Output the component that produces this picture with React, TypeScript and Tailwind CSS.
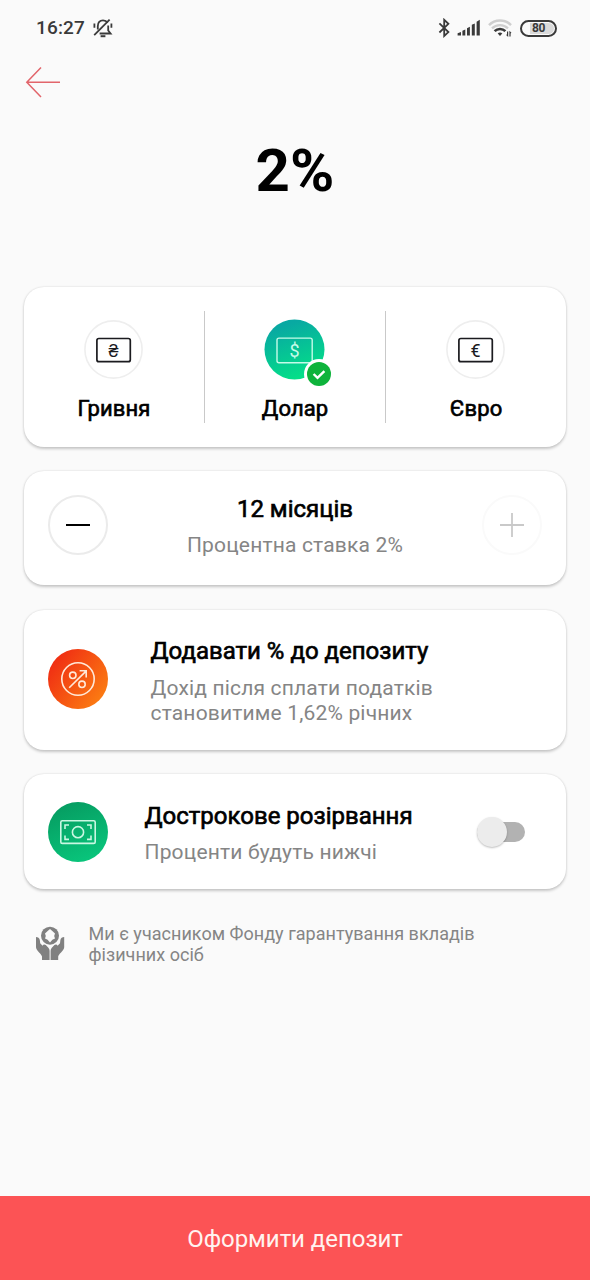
import React from 'react'

interface CardProps {
  children: React.ReactNode
  className?: string
}

const Card: React.FC<CardProps> = ({ children, className }) => (
  <section
    className={`mx-6 flex rounded-[20px] bg-white shadow-[0_1.5px_3px_rgba(0,0,0,0.2),0_0_2px_rgba(0,0,0,0.08)] ${className ?? ''}`}
  >
    {children}
  </section>
)

const StatusBar = () => (
  <header className="flex h-14 items-center justify-between pr-[33px] pl-9 text-[#3a3a3a]">
    <div className="flex items-center gap-2">
      <span className="text-[19px] leading-6 font-medium tracking-[0.15px]">16:27</span>
      <svg width="20" height="20" viewBox="0 0 20 20" fill="none" stroke="currentColor" strokeWidth="1.8">
        <path d="M4.8 11.5V8.2C4.8 4.6 6.8 2.4 10 2.4c2 0 3.6.8 4.5 2.3M15.2 7.4v5.1l2.4 3H6.6" />
        <path d="M1.2 17.2 16.6 1.6" />
        <path d="M7.6 18.2h4.8" strokeWidth="2" />
        <path d="M1.4 5.6v4.2M18.4 5.6v4.2" strokeWidth="1.8" />
      </svg>
    </div>
    <div className="flex items-center">
      <svg width="12" height="20" viewBox="0 0 12 20" fill="none" stroke="currentColor" strokeWidth="1.8">
        <path d="m1.4 5.4 9 8.7L6.2 18V1.8l4.2 4-9 8.7" />
      </svg>
      <svg className="ml-[7px]" width="23" height="18" viewBox="0 0 23 18" fill="currentColor">
        <path d="M0.6 16.4v-2.2l3.4-1.3v3.5zM5.4 16.4v-4.6l2.9-1.2v5.8zM10 16.4V9.2l2.9-1.4v8.6zM14.8 16.4V5.8l3-1.4v12zM19.6 16.4V2.8L22.8.8v15.6z" />
      </svg>
      <svg className="ml-[8px]" width="24" height="20" viewBox="0 0 24 20" fill="none" stroke="currentColor">
        <path d="M1 7.2C7 1 17 1 23 7.2" stroke="#cfcfcf" strokeWidth="2.5" />
        <path d="M4 10.4C8.5 6 15.5 6 20 10.4" stroke="#cfcfcf" strokeWidth="2.3" />
        <path d="M6.6 13.2c3-3 7.8-3 10.8 0" strokeWidth="2.6" />
        <path d="m12 18-2.3-2.5c1.2-1.3 3.4-1.3 4.6 0z" fill="currentColor" stroke="none" />
        <path d="M19.6 13.4v4.2l-1-1M22 18.4v-4.2l1 1" strokeWidth="1.2" />
      </svg>
      <div className="ml-[8px] flex h-[17px] w-[37px] rounded-full border-2 border-current p-px">
        <div className="flex w-full items-center justify-center rounded-full bg-[linear-gradient(90deg,#fafafa_22%,#dadada_22%)] text-[12px] leading-none font-bold tracking-[-0.3px]">
          80
        </div>
      </div>
    </div>
  </header>
)

const Banknote = ({ sign, selected }: { sign: string; selected?: boolean }) => (
  <svg className="mr-[1.5px] overflow-visible" width="60" height="60" viewBox="-0.5 0.5 60 60">
    <defs>
      <linearGradient id="teal" x1="0.3" y1="0" x2="0.65" y2="1">
        <stop offset="0.1" stopColor="#08a9a2" />
        <stop offset="0.95" stopColor="#04df88" />
      </linearGradient>
    </defs>
    {selected ? (
      <circle cx="30" cy="30" r="30" fill="url(#teal)" />
    ) : (
      <circle cx="30" cy="30" r="28.6" fill="#fff" stroke="#eeeeee" strokeWidth="1.6" />
    )}
    <rect
      x={selected ? 12.5 : 13.4}
      y={selected ? 18.6 : 19}
      width={selected ? 35.2 : 33.4}
      height={selected ? 24.6 : 23.2}
      rx="2"
      fill="none"
      stroke={selected ? '#c5fbe9' : '#1b1b1f'}
      strokeWidth={selected ? 1.4 : 1.7}
    />
    <text x="30" y="37" textAnchor="middle" fontSize="18" fill={selected ? '#c5fbe9' : '#1b1b1f'}>
      {sign}
    </text>
    {selected && (
      <>
        <circle cx="54.5" cy="54.5" r="15" fill="#fff" />
        <circle cx="54.5" cy="54.5" r="12" fill="#0eb33b" />
        <path d="m49.1 54.5 3.9 3.9 6.9-6.8" fill="none" stroke="#fff" strokeWidth="2.4" />
      </>
    )}
  </svg>
)

const currencies = [
  { sign: '₴', name: 'Гривня' },
  { sign: '$', name: 'Долар', selected: true },
  { sign: '€', name: 'Євро' },
]

const Title = ({ children }: { children: React.ReactNode }) => (
  <h2 className="text-[24px] leading-7 text-black [-webkit-text-stroke:0.65px_black]">{children}</h2>
)

const Subtitle = ({ children, className }: { children: React.ReactNode; className?: string }) => (
  <p className={`text-[21px] leading-[25px] tracking-[0.17px] text-[#858585] ${className ?? 'mt-2.5'}`}>{children}</p>
)

const PercentIcon = () => (
  <svg className="shrink-0" width="60" height="60" viewBox="0 0 60 60" fill="none" stroke="#ffe9d8" strokeWidth="1.6">
    <defs>
      <linearGradient id="orange" x1="0.1" y1="0.2" x2="0.9" y2="0.8">
        <stop stopColor="#f02f13" />
        <stop offset="1" stopColor="#fb7a12" />
      </linearGradient>
    </defs>
    <circle cx="30" cy="30" r="30" fill="url(#orange)" stroke="none" />
    <circle cx="30" cy="30" r="16.2" />
    <circle cx="24.8" cy="26.3" r="3.2" />
    <circle cx="34" cy="35.3" r="3.2" />
    <path d="M21.2 38.8 37.8 22.4M31.6 21.8h6.6v6.6" />
  </svg>
)

const CashIcon = () => (
  <svg className="shrink-0" width="60" height="60" viewBox="0 0 60 60" fill="none" stroke="#c9f7e2" strokeWidth="1.6">
    <defs>
      <linearGradient id="green" x1="0.3" y1="0" x2="0.7" y2="1">
        <stop stopColor="#069c61" />
        <stop offset="1" stopColor="#09c67c" />
      </linearGradient>
    </defs>
    <circle cx="30" cy="30" r="30" fill="url(#green)" stroke="none" />
    <rect x="12.8" y="18.8" width="34.4" height="22.6" rx="1.5" />
    <circle cx="30" cy="30.2" r="5.6" />
    <path d="M17 27v-4h4M39 23h4v4M43 33.4v4h-4M21 37.4h-4v-4" />
  </svg>
)

const HandsIcon = () => (
  <svg className="shrink-0" width="30" height="35" viewBox="0 0 30 35" fill="#808080">
    <circle cx="15" cy="9.7" r="9" />
    <path d="m15 3-2.6 2.2-2.4 2.4.8 2.4-.8 2.4 2.6 1.4L15 16.6l2.4-2.8 2.6-1.4-.8-2.4.8-2.4-2.4-2.4z" fill="#fafafa" />
    <path d="M1 11c1.8 0 3.6 1.2 3.8 3l.4 3.2 2.4 2.6c.6-1.4 1.9-1.7 3.2-.7l2.6 2.7c.8.9 1.2 1.9 1.2 3V34H7v-3.4c0-2.4-5.6-5.6-6-9.4z" />
    <path d="M29.2 11c-1.8 0-3.6 1.2-3.8 3l-.4 3.2-2.4 2.6c-.6-1.4-1.9-1.7-3.2-.7l-2.6 2.7c-.8.9-1.2 1.9-1.2 3V34h7.6v-3.4c0-2.4 5.6-5.6 6-9.4z" />
  </svg>
)

export default function App() {
  return (
    <main className="flex h-[1280px] w-[590px] flex-col bg-[#fafafa] font-[Roboto,sans-serif]">
      <StatusBar />

      <button className="mt-[10px] ml-[25px] w-9">
        <svg width="36" height="32" viewBox="0 0 36 32" fill="none" stroke="#e2656b" strokeWidth="1.5">
          <path d="M16 1.5 1.8 16.2 16 31M1.8 16.2H35" />
        </svg>
      </button>

      <h1 className="mt-[38px] text-center text-[60px] leading-[70px] font-bold text-black">2%</h1>

      <Card className="mt-[81px] h-40 py-6">
        {currencies.map((item, index) => (
          <div
            key={item.name}
            className={`flex flex-1 flex-col items-center pt-[8.5px] ${index > 0 ? 'border-l border-[#c9c9c9]' : ''}`}
          >
            <Banknote sign={item.sign} selected={item.selected} />
            <span className="mt-[16.5px] text-[22px] leading-[25px] tracking-[0.1px] text-black [-webkit-text-stroke:0.65px_black]">
              {item.name}
            </span>
          </div>
        ))}
      </Card>

      <Card className="mt-6 h-[114px] justify-between px-6 pt-6">
        <button className="flex size-[60px] items-center justify-center rounded-full border-2 border-[#ebebeb]">
          <span className="h-0.5 w-6 bg-black" />
        </button>
        <div className="text-center">
          <Title>12 місяців</Title>
          <Subtitle>Процентна ставка 2%</Subtitle>
        </div>
        <button className="flex size-[60px] items-center justify-center rounded-full border-2 border-[#fafafa]">
          <svg width="24" height="24" viewBox="0 0 24 24" stroke="#c9c9c9" strokeWidth="1.8">
            <path d="M0 12h24M12 0v24" />
          </svg>
        </button>
      </Card>

      <Card className="mt-[25px] h-[140px] items-start px-6 pt-[27px]">
        <div className="mt-3">
          <PercentIcon />
        </div>
        <div className="ml-[42.5px]">
          <Title>Додавати % до депозиту</Title>
          <Subtitle className="mt-[11px]">
            Дохід після сплати податків
            <br />
            становитиме 1,62% річних
          </Subtitle>
        </div>
      </Card>

      <Card className="mt-6 h-[115px] items-start px-6 pt-7">
        <CashIcon />
        <div className="ml-[36.5px] grow">
          <Title>Дострокове розірвання</Title>
          <Subtitle>Проценти будуть нижчі</Subtitle>
        </div>
        <button className="mt-[15px] mr-[17px] flex h-[30px] w-12 items-center">
          <span className="flex h-5 w-full items-center rounded-full bg-[#b2b2b2]">
            <span className="size-[30px] shrink-0 rounded-full bg-[#ececec] shadow-[0_1px_2px_rgba(0,0,0,0.25)]" />
          </span>
        </button>
      </Card>

      <div className="mt-[34px] flex pl-[35px]">
        <div className="mt-[3px]">
          <HandsIcon />
        </div>
        <p className="ml-[23.5px] text-[18px] leading-[21px] tracking-[0.03px] text-[#858585]">
          Ми є учасником Фонду гарантування вкладів
          <br />
          фізичних осіб
        </p>
      </div>

      <button className="mt-auto h-[84px] w-full bg-[#fc5355] pt-0.5 text-[24px] tracking-[-0.05px] text-[#fff3f0]">
        Оформити депозит
      </button>
    </main>
  )
}
